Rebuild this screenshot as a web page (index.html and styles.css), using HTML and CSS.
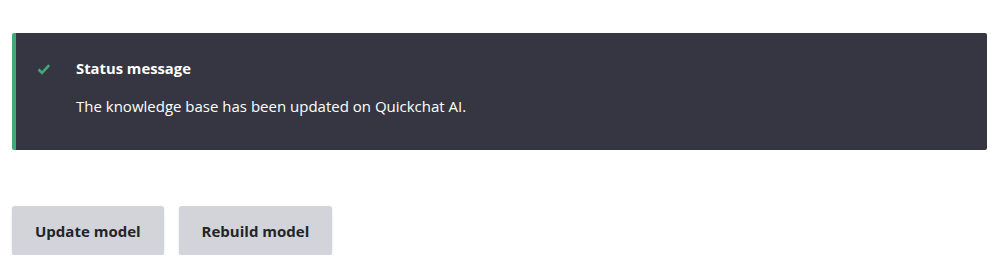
FILE: index.html
```html
<!DOCTYPE html>
<html lang="en">
<head>
    <meta charset="UTF-8">
    <title>Quickchat AI</title>
    <link rel="stylesheet" href="styles.css">
</head>
<body>

    <!-- status message -->
    <div class="messages messages-status" role="status">
        <div class="messages-icon">
            <svg width="16" height="16" viewBox="0 0 16 16">
                <path d="M2.5 8.5 L6 11.8 L13.2 4.2" fill="none" stroke="#42a877" stroke-width="2.6"/>
            </svg>
        </div>
        <div class="messages-body">
            <h2 class="messages-title">Status message</h2>
            <p class="messages-text">The knowledge base has been updated on Quickchat AI.</p>
        </div>
    </div>

    <!-- actions -->
    <div class="form-actions">
        <button class="button" type="button">Update model</button>
        <button class="button" type="button">Rebuild model</button>
    </div>

</body>
</html>
```

FILE: styles.css
```css
body {
    font-family: 'Open Sans', 'Noto Sans', sans-serif;
    background-color: #ffffff;
    color: #232429;
    margin: 0;
    padding: 33px 16px 0 12px;
}
.messages {
    display: flex;
    background-color: #353641;
    border-left: 4px solid #42a877;
    border-radius: 2px;
    height: 117px;
    box-sizing: border-box;
    padding: 25px 20px 0 20px;
    color: #ffffff;
}
.messages-icon {
    width: 40px;
    padding-top: 2px;
}
.messages-title {
    font-size: 14.8px;
    font-weight: 700;
    margin: 0;
    line-height: 20px;
}
.messages-text {
    font-size: 15px;
    margin: 18px 0 0 0;
    line-height: 20px;
}
.form-actions {
    display: flex;
    gap: 15px;
    margin-top: 56px;
}
.button {
    font-family: inherit;
    font-size: 15px;
    font-weight: 700;
    color: #232429;
    background-color: #d3d4d9;
    border: none;
    border-radius: 3px;
    height: 49px;
    padding: 0 23px;
    box-shadow: 0 1px 2px rgba(0, 0, 0, 0.15);
}
```
